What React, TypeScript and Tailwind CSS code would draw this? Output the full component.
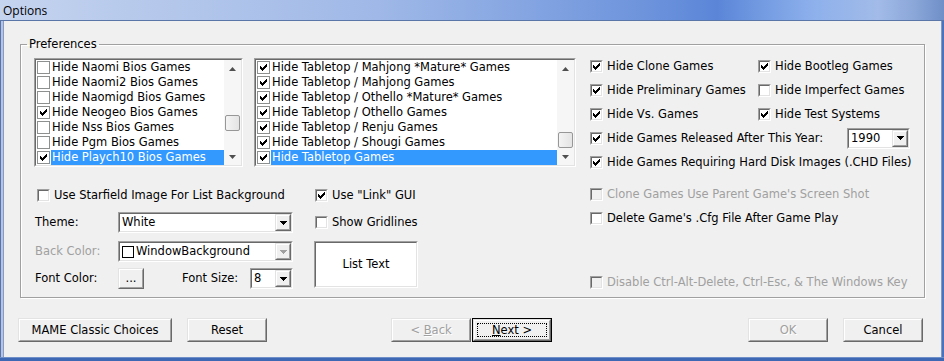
import React from "react";

type Item = { label: string; checked?: boolean; sel?: boolean };

const leftItems: Item[] = [
  { label: "Hide Naomi Bios Games" },
  { label: "Hide Naomi2 Bios Games" },
  { label: "Hide Naomigd Bios Games" },
  { label: "Hide Neogeo Bios Games", checked: true },
  { label: "Hide Nss Bios Games" },
  { label: "Hide Pgm Bios Games" },
  { label: "Hide Playch10 Bios Games", checked: true, sel: true },
];

const midItems: Item[] = [
  { label: "Hide Tabletop / Mahjong *Mature* Games", checked: true },
  { label: "Hide Tabletop / Mahjong Games", checked: true },
  { label: "Hide Tabletop / Othello *Mature* Games", checked: true },
  { label: "Hide Tabletop / Othello Games", checked: true },
  { label: "Hide Tabletop / Renju Games", checked: true },
  { label: "Hide Tabletop / Shougi Games", checked: true },
  { label: "Hide Tabletop Games", checked: true, sel: true },
];

// classic 7x7 check glyph
const Mark = ({ color = "#000" }: { color?: string }) => (
  <svg width="7" height="7" viewBox="0 0 7 7" shapeRendering="crispEdges" fill={color}>
    <rect x="0" y="2" width="1" height="3" />
    <rect x="1" y="3" width="1" height="3" />
    <rect x="2" y="4" width="1" height="3" />
    <rect x="3" y="3" width="1" height="3" />
    <rect x="4" y="2" width="1" height="3" />
    <rect x="5" y="1" width="1" height="3" />
    <rect x="6" y="0" width="1" height="3" />
  </svg>
);

const Box = ({ checked, disabled }: { checked?: boolean; disabled?: boolean }) => (
  <span className="flex h-[13px] w-[13px] shrink-0 border border-t-[#a0a0a0] border-l-[#a0a0a0] border-b-white border-r-white">
    <span
      className={`flex h-[11px] w-[11px] items-center justify-center border border-t-[#696969] border-l-[#696969] border-b-[#e3e3e3] border-r-[#e3e3e3] ${
        disabled ? "bg-[#f0f0f0]" : "bg-white"
      }`}
    >
      {checked && <Mark />}
    </span>
  </span>
);

const FlatBox = ({ checked }: { checked?: boolean }) => (
  <span className="flex h-[13px] w-[13px] shrink-0 items-center justify-center border border-[#8e8f8f] bg-white">
    {checked && <Mark />}
  </span>
);

const Opt = ({
  label,
  checked,
  disabled,
  className = "",
}: {
  label: string;
  checked?: boolean;
  disabled?: boolean;
  className?: string;
}) => (
  <div className={`flex items-center gap-[4px] whitespace-nowrap ${className}`}>
    <Box checked={checked} disabled={disabled} />
    <span className={disabled ? "text-[#a0a0a0]" : ""}>{label}</span>
  </div>
);

const Sunken = ({
  className = "",
  inner = "",
  children,
}: {
  className?: string;
  inner?: string;
  children?: React.ReactNode;
}) => (
  <div className={`flex border border-t-[#a0a0a0] border-l-[#a0a0a0] border-b-white border-r-white ${className}`}>
    <div
      className={`flex min-w-0 flex-1 border border-t-[#696969] border-l-[#696969] border-b-[#e3e3e3] border-r-[#e3e3e3] ${inner}`}
    >
      {children}
    </div>
  </div>
);

const Raised = ({ className = "", children }: { className?: string; children?: React.ReactNode }) => (
  <div className={`flex border border-t-[#e3e3e3] border-l-[#e3e3e3] border-b-[#696969] border-r-[#696969] ${className}`}>
    <div className="flex flex-1 items-center justify-center border border-t-white border-l-white border-b-[#a0a0a0] border-r-[#a0a0a0] bg-[#f0f0f0]">
      {children}
    </div>
  </div>
);

const Arrow = ({ color = "#000" }: { color?: string }) => (
  <svg width="7" height="4" viewBox="0 0 7 4" shapeRendering="crispEdges" fill={color}>
    <polygon points="0,0 7,0 3.5,4" />
  </svg>
);

const Combo = ({
  className = "",
  text,
  disabled,
  swatch,
}: {
  className?: string;
  text: string;
  disabled?: boolean;
  swatch?: boolean;
}) => (
  <Sunken className={`h-[21px] ${className}`} inner="bg-white items-center">
    {swatch && <span className="ml-[2px] h-[12px] w-[12px] shrink-0 border border-black bg-white" />}
    <span className="flex-1 whitespace-nowrap pl-[2px]">{text}</span>
    <Raised className="h-[17px] w-[16px] shrink-0">
      <Arrow color={disabled ? "#a0a0a0" : "#000"} />
    </Raised>
  </Sunken>
);

const Tri = ({ up }: { up?: boolean }) => (
  <svg width="7" height="4" viewBox="0 0 7 4" fill="#4f4f4f">
    <polygon points={up ? "0,4 7,4 3.5,0" : "0,0 7,0 3.5,4"} />
  </svg>
);

const ScrollBar = ({ spacer }: { spacer: string }) => (
  <div className="flex w-[17px] shrink-0 flex-col bg-[#f6f6f6]">
    <div className="flex h-[17px] items-center justify-center">
      <Tri up />
    </div>
    <div className="flex flex-1 flex-col items-center">
      <div className={spacer} />
      <div className="h-[16px] w-[15px] rounded-[2px] border border-[#979797] bg-[linear-gradient(to_right,#f4f4f4,#e4e4e4)]" />
    </div>
    <div className="flex h-[17px] items-center justify-center">
      <Tri />
    </div>
  </div>
);

const ListView = ({
  items,
  className,
  spacer,
}: {
  items: Item[];
  className: string;
  spacer: string;
}) => (
  <Sunken className={className} inner="bg-white">
    <div className="flex min-w-0 flex-1 flex-col">
      {items.map((it) => (
        <div key={it.label} className="flex h-[15px] items-center whitespace-nowrap">
          <span className="ml-[1px] flex">
            <FlatBox checked={it.checked} />
          </span>
          <span
            className={`ml-[1px] flex h-[15px] flex-1 items-center pl-[1px] ${
              it.sel ? "bg-[#3399ff] text-white" : ""
            }`}
          >
            {it.label}
          </span>
        </div>
      ))}
    </div>
    <ScrollBar spacer={spacer} />
  </Sunken>
);

const Btn = ({
  className = "",
  children,
  disabled,
  isDefault,
}: {
  className?: string;
  children: React.ReactNode;
  disabled?: boolean;
  isDefault?: boolean;
}) => {
  const label = (
    <span className={disabled ? "text-[#a0a0a0] [text-shadow:1px_1px_0_#fff]" : ""}>{children}</span>
  );
  if (isDefault) {
    return (
      <div className={`flex border border-black ${className}`}>
        <Raised className="flex-1">
          <div className="m-[2px] flex h-[14px] flex-1 items-center justify-center border border-dotted border-black">
            {label}
          </div>
        </Raised>
      </div>
    );
  }
  return <Raised className={className}>{label}</Raised>;
};

export default function App() {
  return (
    <div className="flex h-[361px] w-[944px] flex-col overflow-hidden bg-[#4a72bb] font-['DejaVu_Sans',sans-serif] text-[11.5px] leading-[13px] text-black">
      {/* title bar */}
      <div className="flex h-[21px] shrink-0 items-center border-b border-b-[#5a76a8] bg-[linear-gradient(to_right,#c5d4ef_0%,#b9cbec_12%,#aec3ea_25%,#9fb8e7_40%,#86a6e2_55%,#6e94dc_68%,#5b86d8_76%,#6f98e0_80%,#8db0ec_86%,#a2bbe8_93%,#8aa6d8_97%,#6f8fc8_100%)] pl-[3px] font-['Open_Sans',sans-serif] text-[12px]">
        Options
      </div>

      <div className="flex flex-1">
        <div className="w-[4px] border-l border-r border-l-[#5a74a8] border-r-[#8b9bc0] bg-[#b4c4e8]" />

        {/* client area */}
        <div className="flex w-[937px] flex-col bg-[#f0f0f0]">
          <fieldset className="mx-[16px] mt-[17px] h-[260px] border border-[#a0a0a0] shadow-[inset_1px_1px_0_#fff,1px_1px_0_#fff]">
            <legend className="ml-[6px] px-[2px]">Preferences</legend>

            {/* top row */}
            <div className="mt-[3px] flex items-start">
              <ListView items={leftItems} className="ml-[13px] mt-[4px] h-[109px] w-[209px]" spacer="h-[38px]" />
              <ListView items={midItems} className="ml-[11px] mt-[4px] h-[109px] w-[322px]" spacer="h-[55px]" />

              <div className="ml-[14px] flex flex-col">
                <div className="flex h-[24px] items-center">
                  <Opt className="w-[168px]" checked label="Hide Clone Games" />
                  <Opt checked label="Hide Bootleg Games" />
                </div>
                <div className="flex h-[24px] items-center">
                  <Opt className="w-[168px]" checked label="Hide Preliminary Games" />
                  <Opt label="Hide Imperfect Games" />
                </div>
                <div className="flex h-[24px] items-center">
                  <Opt className="w-[168px]" checked label="Hide Vs. Games" />
                  <Opt checked label="Hide Test Systems" />
                </div>
                <div className="flex h-[24px] items-center">
                  <Opt className="w-[257px]" checked label="Hide Games Released After This Year:" />
                  <Combo className="w-[63px]" text="1990" />
                </div>
                <div className="flex h-[24px] items-center">
                  <Opt checked label="Hide Games Requiring Hard Disk Images (.CHD Files)" />
                </div>
              </div>
            </div>

            {/* bottom row */}
            <div className="mt-[9px] flex items-start">
              <div className="ml-[13px] flex w-[259px] flex-col">
                <div className="flex h-[24px] items-center pl-[3px]">
                  <Opt label="Use Starfield Image For List Background" />
                </div>
                <div className="mt-[5px] flex h-[21px] items-center">
                  <span className="w-[84px] pl-[1px]">Theme:</span>
                  <Combo className="w-[175px]" text="White" />
                </div>
                <div className="mt-[8px] flex h-[21px] items-center">
                  <span className="w-[84px] pl-[1px] text-[#a0a0a0]">Back Color:</span>
                  <Combo className="w-[175px]" text="WindowBackground" swatch disabled />
                </div>
                <div className="mt-[6px] flex h-[21px] items-center">
                  <span className="w-[84px] pl-[1px]">Font Color:</span>
                  <Btn className="h-[21px] w-[26px]">...</Btn>
                  <span className="ml-[38px] w-[68px]">Font Size:</span>
                  <Combo className="w-[43px]" text="8" />
                </div>
              </div>

              <div className="ml-[21px] flex w-[104px] flex-col">
                <div className="flex h-[24px] items-center pl-[1px]">
                  <Opt checked label={'Use "Link" GUI'} />
                </div>
                <div className="mt-[3px] flex h-[24px] items-center pl-[1px]">
                  <Opt label="Show Gridlines" />
                </div>
                <Sunken className="mt-[7px] h-[47px]" inner="bg-white items-center justify-center">
                  List Text
                </Sunken>
              </div>

              <div className="-mt-[1px] ml-[172px] flex flex-col">
                <div className="flex h-[24px] items-center">
                  <Opt disabled label="Clone Games Use Parent Game's Screen Shot" />
                </div>
                <div className="flex h-[24px] items-center">
                  <Opt label="Delete Game's .Cfg File After Game Play" />
                </div>
                <div className="mt-[40px] flex h-[24px] items-center">
                  <Opt disabled label="Disable Ctrl-Alt-Delete, Ctrl-Esc, & The Windows Key" />
                </div>
              </div>
            </div>
          </fieldset>

          {/* dialog buttons */}
          <div className="mt-[20px] flex">
            <Btn className="ml-[14px] h-[24px] w-[154px]">MAME Classic Choices</Btn>
            <Btn className="ml-[15px] h-[24px] w-[80px]">Reset</Btn>
            <Btn className="ml-[124px] h-[24px] w-[80px]" disabled>
              &lt; <u>B</u>ack
            </Btn>
            <Btn className="ml-[1px] h-[24px] w-[80px]" isDefault>
              <u>N</u>ext &gt;
            </Btn>
            <Btn className="ml-[196px] h-[24px] w-[80px]" disabled>
              OK
            </Btn>
            <Btn className="ml-[15px] h-[24px] w-[80px]">Cancel</Btn>
          </div>
        </div>

        <div className="w-[3px] border-l border-l-[#7e98c8] bg-[#4a73be]" />
      </div>

      <div className="h-[4px] shrink-0 border-t border-t-[#6f8fc8] bg-[#3e67b4]" />
    </div>
  );
}
